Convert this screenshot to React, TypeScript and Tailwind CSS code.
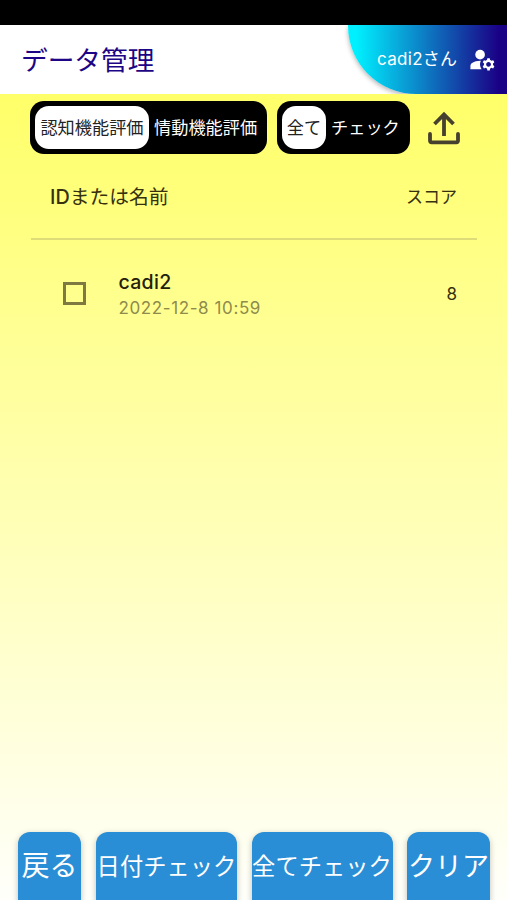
import { MdManageAccounts } from 'react-icons/md'

const actions = [
  { label: '戻る', style: 'w-[63px] text-[28px]' },
  { label: '日付チェック', style: 'w-[141px] ml-[15px] text-[23.3px]' },
  { label: '全てチェック', style: 'w-[141px] ml-[14.5px] text-[23.3px]' },
  { label: 'クリア', style: 'w-[83px] ml-[14.5px] text-[27px]' },
]

function Header() {
  return (
    <header className="flex h-[69px] justify-between bg-white">
      <h1 className="pt-px pl-[21px] text-[26.7px] leading-[69px] text-[#1d0585]">
        データ管理
      </h1>
      <div className="flex w-[159px] items-center rounded-bl-[68px] bg-linear-to-r/srgb from-[#00f0ff] from-5% to-[#1a0085] to-95% pl-[29px] text-white shadow-[0_2px_5px_rgba(0,0,0,0.3)]">
        <span className="w-[91px] pt-px text-[17px] tracking-[0.3px]">
          cadi2さん
        </span>
        <MdManageAccounts className="size-[29px]" />
      </div>
    </header>
  )
}

function UploadIcon() {
  return (
    <svg
      viewBox="0 0 34 34"
      className="ml-[17px] size-[34px]"
      fill="none"
      stroke="#46402f"
      strokeWidth="3.8"
    >
      <path d="M17 25V4M7.5 13l9.5-9.5 9.5 9.5" />
      <path
        d="M3 23v6.5q0 1.8 1.8 1.8h24.4q1.8 0 1.8-1.8V23"
        strokeLinecap="round"
      />
    </svg>
  )
}

function Filters() {
  return (
    <div className="flex items-center pt-[7px] pl-[30px] text-[17.2px] leading-[43px] whitespace-nowrap">
      <div className="flex h-[53px] w-[237px] rounded-[14px] bg-black p-[5px] text-white">
        <button className="w-[114px] rounded-[14px] bg-white text-[#222]">
          認知機能評価
        </button>
        <button className="ml-[5px]">情動機能評価</button>
      </div>
      <div className="ml-[10px] flex h-[53px] w-[133px] rounded-[14px] bg-black p-[5px] text-white">
        <button className="w-[44px] rounded-[14px] bg-white text-[#222]">
          全て
        </button>
        <button className="ml-[5px]">チェック</button>
      </div>
      <UploadIcon />
    </div>
  )
}

function ScoreList() {
  return (
    <div className="mr-[30px] ml-[31px] text-[#35310f]">
      <div className="flex h-[86px] items-center justify-between border-b-2 border-[#dddc76] pt-[3px] pr-[20px] pl-[19px]">
        <span className="text-[19.8px]">
          <span className="font-medium">ID</span>または名前
        </span>
        <span className="text-[17px]">スコア</span>
      </div>
      <div className="flex h-[107px] items-center pr-[20px] pl-[32px]">
        <span className="size-[23px] border-3 border-[#7d7940]" />
        <div className="ml-[32.5px] flex-1 pt-[3px]">
          <p className="text-[19.5px] leading-[26px] font-medium tracking-[0.3px] text-[#24210b]">
            cadi2
          </p>
          <p className="text-[17px] leading-[27px] tracking-[0.6px] text-[#8e8b4c]">
            2022-12-8 10:59
          </p>
        </div>
        <span className="pt-[2px] text-[17px]">8</span>
      </div>
    </div>
  )
}

export default function App() {
  return (
    <div className="flex h-[900px] w-[507px] flex-col overflow-hidden bg-black pt-[25px] font-['Inter','Noto_Sans_CJK_JP',sans-serif]">
      <Header />
      <main className="flex flex-1 flex-col bg-linear-to-b/srgb from-[#ffff69] to-[#fffffb]">
        <Filters />
        <ScoreList />
        <div className="mt-auto flex h-[68px] pl-[18px]">
          {actions.map((action) => (
            <button
              key={action.label}
              className={`${action.style} flex h-[80px] shrink-0 justify-center rounded-[12px] bg-[#298ed5] leading-[69px] whitespace-nowrap text-white shadow-[0_2px_6px_rgba(0,0,0,0.25)]`}
            >
              {action.label}
            </button>
          ))}
        </div>
      </main>
    </div>
  )
}
